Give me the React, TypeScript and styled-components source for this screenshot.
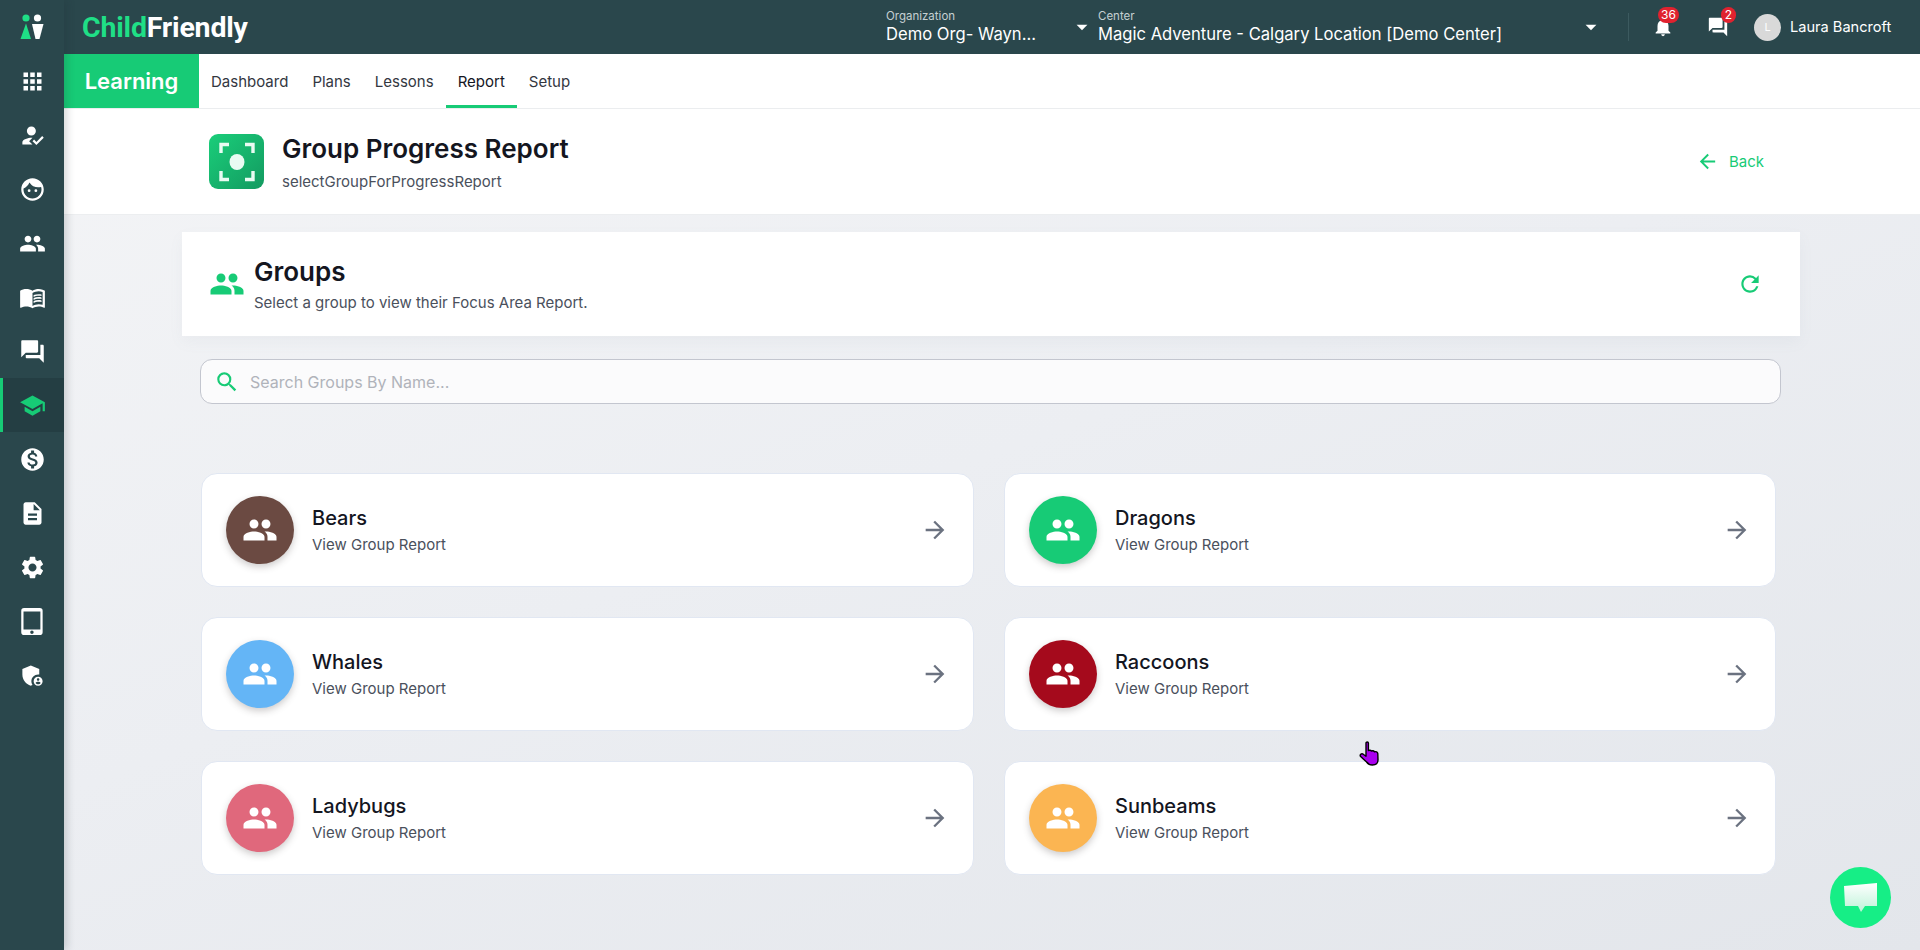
import styled, { createGlobalStyle } from 'styled-components';
import {
  MdAdminPanelSettings,
  MdApps,
  MdArrowBack,
  MdArrowDropDown,
  MdArrowForward,
  MdDescription,
  MdFace,
  MdForum,
  MdHowToReg,
  MdMenuBook,
  MdMonetizationOn,
  MdNotifications,
  MdOutlineSearch,
  MdPeople,
  MdRefresh,
  MdSchool,
  MdSettings,
  MdTabletMac,
} from 'react-icons/md';

const colors = {
  dark: '#2a474c',
  darkActive: '#243e43',
  green: '#17cb76',
  text: '#14161f',
  muted: '#4a505c',
};

const GlobalStyle = createGlobalStyle`
  html, body {
    margin: 0;
    height: 950px;
    overflow: hidden;
    font-family: Inter, "Liberation Sans", sans-serif;
    background: #eef0f3;
  }
  * { box-sizing: border-box; }
`;

const Shell = styled.div`
  display: flex;
  width: 1920px;
  height: 950px;
`;

const Sidebar = styled.aside`
  width: 64px;
  flex: none;
  background: ${colors.dark};
  display: flex;
  flex-direction: column;
  position: relative;
  z-index: 2;
  box-shadow: 3px 0 8px rgba(30, 40, 50, 0.18);
`;

const SideLogo = styled.div`
  height: 54px;
  display: flex;
  align-items: center;
  justify-content: center;
`;

const SideItem = styled.div<{ $active?: boolean }>`
  height: 54px;
  display: flex;
  align-items: center;
  justify-content: center;
  font-size: 27px;
  color: ${(p) => (p.$active ? colors.green : '#fff')};
  background: ${(p) => (p.$active ? colors.darkActive : 'transparent')};
  border-left: ${(p) => (p.$active ? `3px solid ${colors.green}` : '0')};
  padding-right: ${(p) => (p.$active ? '3px' : '0')};
`;

const Main = styled.div`
  flex: 1;
  min-width: 0;
  display: flex;
  flex-direction: column;
`;

const TopBar = styled.header`
  height: 54px;
  flex: none;
  background: ${colors.dark};
  display: flex;
  align-items: center;
  color: #fff;
`;

const Logo = styled.div`
  margin-left: 18px;
  font-family: Roboto, sans-serif;
  font-size: 28.5px;
  font-weight: 700;
  letter-spacing: -0.2px;
  color: #fff;
  width: 804px;
  flex: none;
  span { color: #1fdf86; }
`;

const Picker = styled.div<{ $width: number }>`
  width: ${(p) => p.$width}px;
  flex: none;
  display: flex;
  align-items: center;
  justify-content: space-between;
`;

const PickerText = styled.div`
  display: flex;
  flex-direction: column;
  line-height: 1;
`;

const PickerLabel = styled.span`
  font-size: 11.5px;
  color: #c5d0d2;
  margin-bottom: 3px;
`;

const PickerValue = styled.span`
  font-size: 16.6px;
  color: #fff;
  white-space: nowrap;
`;

const Caret = styled.div`
  font-size: 26px;
  display: flex;
  margin-right: 3px;
`;

const TopDivider = styled.div`
  width: 1px;
  height: 28px;
  background: #3c5a5f;
  margin-left: 21px;
`;

const IconButton = styled.div<{ $gap: number }>`
  position: relative;
  display: flex;
  font-size: 22px;
  margin-left: ${(p) => p.$gap}px;
`;

const Badge = styled.span<{ $left: number }>`
  position: absolute;
  left: ${(p) => p.$left}px;
  top: -9px;
  height: 16px;
  min-width: 15px;
  padding: 0 3px;
  border-radius: 8px;
  background: #e0222f;
  color: #fff;
  font-size: 12px;
  line-height: 16px;
  text-align: center;
`;

const Avatar = styled.div`
  width: 27px;
  height: 27px;
  border-radius: 50%;
  background: #d9d9d9;
  color: #fff;
  font-size: 11px;
  display: flex;
  align-items: center;
  justify-content: center;
  margin-left: 25px;
`;

const UserName = styled.span`
  font-size: 14.6px;
  margin-left: 9px;
  white-space: nowrap;
`;

const NavBar = styled.nav`
  height: 55px;
  flex: none;
  display: flex;
  background: #fff;
  border-bottom: 1px solid #ebedef;
`;

const ModuleTab = styled.div`
  width: 135px;
  background: ${colors.green};
  color: #fff;
  font-size: 22px;
  font-weight: 600;
  display: flex;
  align-items: center;
  justify-content: center;
`;

const NavList = styled.div`
  display: flex;
  margin-left: 0;
  padding-left: 0;
`;

const NavItem = styled.div<{ $active?: boolean }>`
  display: flex;
  align-items: center;
  padding: 0 12px;
  font-size: 15px;
  color: ${(p) => (p.$active ? '#14161f' : '#33373f')};
  border-bottom: 3px solid ${(p) => (p.$active ? colors.green : 'transparent')};
  padding-top: 3px;
`;

const Page = styled.main`
  flex: 1;
  display: flex;
  flex-direction: column;
  background: linear-gradient(160deg, #f3f4f6 0%, #eceef2 45%, #e3e6eb 100%);
`;

const PageHeader = styled.div`
  height: 106px;
  flex: none;
  background: #fff;
  display: flex;
  align-items: center;
  padding: 0 156px 0 145px;
  border-bottom: 1px solid #eceef0;
`;

const ReportIcon = styled.div`
  width: 55px;
  height: 55px;
  border-radius: 9px;
  background: linear-gradient(135deg, #1ace7a, #139a60);
  display: flex;
  align-items: center;
  justify-content: center;
`;

const HeaderText = styled.div`
  margin-left: 18px;
  flex: 1;
`;

const PageTitle = styled.h1`
  margin: 0;
  font-size: 26px;
  line-height: 32px;
  font-weight: 600;
  color: ${colors.text};
`;

const PageSubtitle = styled.p`
  margin: 8px 0 0;
  font-size: 15px;
  line-height: 18px;
  color: ${colors.muted};
`;

const BackLink = styled.div`
  display: flex;
  align-items: center;
  gap: 10px;
  color: ${colors.green};
  font-size: 15px;
  svg { font-size: 23px; }
`;

const Panel = styled.section`
  margin: 17px 120px 0 118px;
  display: flex;
  flex-direction: column;
`;

const GroupsHead = styled.div`
  height: 104px;
  background: #fff;
  display: flex;
  align-items: center;
  padding: 0 37px 0 27px;
  box-shadow: 0 6px 14px rgba(120, 130, 150, 0.06);
  svg.people { font-size: 36px; color: ${colors.green}; margin-top: 0; }
`;

const GroupsText = styled.div`
  margin-left: 9px;
  flex: 1;
`;

const GroupsTitle = styled.h2`
  margin: 0;
  font-size: 26px;
  line-height: 32px;
  font-weight: 600;
  color: ${colors.text};
`;

const GroupsSubtitle = styled.p`
  margin: 6px 0 0;
  font-size: 15px;
  line-height: 18px;
  color: ${colors.muted};
`;

const Refresh = styled.div`
  display: flex;
  font-size: 26px;
  color: ${colors.green};
`;

const Body = styled.div`
  padding: 23px 19px 0 18px;
`;

const SearchBox = styled.div`
  height: 45px;
  border: 1px solid #c3c6cf;
  border-radius: 12px;
  background: #fbfbfc;
  display: flex;
  align-items: center;
  padding-left: 13px;
  svg { font-size: 26px; color: ${colors.green}; }
`;

const SearchPlaceholder = styled.span`
  margin-left: 10px;
  font-size: 16px;
  color: #b0b3ba;
`;

const Grid = styled.div`
  margin-top: 69px;
  display: grid;
  grid-template-columns: 773px 772px;
  grid-auto-rows: 114px;
  gap: 30px 30px;
  padding-left: 1px;
`;

const Card = styled.div`
  background: #fff;
  border: 1px solid #e1e7f2;
  border-radius: 16px;
  display: flex;
  align-items: center;
  padding: 0 24px;
`;

const GroupAvatar = styled.div<{ $color: string }>`
  width: 68px;
  height: 68px;
  border-radius: 50%;
  background: ${(p) => p.$color};
  color: #fff;
  font-size: 36px;
  display: flex;
  align-items: center;
  justify-content: center;
  box-shadow: 0 3px 7px rgba(60, 50, 50, 0.25);
`;

const CardText = styled.div`
  flex: 1;
  margin-left: 18px;
`;

const CardName = styled.div`
  font-size: 20px;
  line-height: 24px;
  font-weight: 500;
  color: ${colors.text};
`;

const CardHint = styled.div`
  margin-top: 6px;
  font-size: 15px;
  line-height: 18px;
  color: ${colors.muted};
`;

const CardArrow = styled.div`
  display: flex;
  font-size: 28px;
  color: #6b7280;
`;

const ChatFab = styled.div`
  position: fixed;
  left: 1830px;
  top: 867px;
  width: 61px;
  height: 61px;
  border-radius: 50%;
  background: #16ee86;
  display: flex;
  align-items: center;
  justify-content: center;
`;

const Pointer = styled.svg`
  position: fixed;
  left: 1359px;
  top: 741px;
`;

const sideItems = [
  MdApps,
  MdHowToReg,
  MdFace,
  MdPeople,
  MdMenuBook,
  MdForum,
  MdSchool,
  MdMonetizationOn,
  MdDescription,
  MdSettings,
  MdTabletMac,
  MdAdminPanelSettings,
];

const navItems = ['Dashboard', 'Plans', 'Lessons', 'Report', 'Setup'];

const groups = [
  { name: 'Bears', color: '#6b4a42' },
  { name: 'Dragons', color: '#17cb76' },
  { name: 'Whales', color: '#64b5f6' },
  { name: 'Raccoons', color: '#a50a1c' },
  { name: 'Ladybugs', color: '#e0687c' },
  { name: 'Sunbeams', color: '#fbb552' },
];

const BrandMark = () => (
  <svg width="24" height="26" viewBox="0 0 24 26">
    <circle cx="6" cy="4" r="3.6" fill="#1fdf86" />
    <circle cx="17.5" cy="4" r="3.6" fill="#fff" />
    <path d="M6 9.5 L11 25 H0.5 Z" fill="#1fdf86" />
    <path d="M12 10 H23.5 L19.5 25 H15.5 Z" fill="#fff" />
  </svg>
);

const FocusIcon = () => (
  <svg width="36" height="40" viewBox="0 0 36 40" fill="none" stroke="#e9fbf2" strokeWidth="3.4">
    <path d="M2 11 V2.5 H10 M26 2.5 H34 V11 M2 29 V37.5 H10 M26 37.5 H34 V29" />
    <ellipse cx="18" cy="20" rx="7.5" ry="8" fill="#e9fbf2" stroke="none" />
  </svg>
);

const ChatBubble = () => (
  <svg width="34" height="30" viewBox="0 0 34 30">
    <defs>
      <linearGradient id="bubble" x1="0" y1="0" x2="0" y2="1">
        <stop offset="0" stopColor="#ffffff" />
        <stop offset="1" stopColor="#bdf3d8" />
      </linearGradient>
    </defs>
    <path d="M0 3 L33 0 V23 H21 L17 29 L14 23 H1 Z" fill="url(#bubble)" />
  </svg>
);

const HandPointer = () => (
  <Pointer width="20" height="25" viewBox="0 0 20 25">
    <path
      d="M7 2 C7 0.6 9.4 0.6 9.4 2 V9.5 C11 9 12 9.4 12.6 10 C14 9.6 15 10 15.5 10.8 C17 10.4 18.6 11 18.8 12.6 L19 19 C19 22.4 16.6 24 13.4 24 C10.6 24 9 23 7.6 21 L1.6 15.6 C0.4 14 2.4 12 4.2 13.2 L7 15.2 Z"
      fill="#a900ee"
      stroke="#000"
      strokeWidth="1.4"
      strokeLinejoin="round"
    />
  </Pointer>
);

export default function App() {
  return (
    <>
      <GlobalStyle />
      <Shell>
        <Sidebar>
          <SideLogo>
            <BrandMark />
          </SideLogo>
          {sideItems.map((Icon, i) => (
            <SideItem key={i} $active={Icon === MdSchool}>
              <Icon />
            </SideItem>
          ))}
        </Sidebar>
        <Main>
          <TopBar>
            <Logo>
              <span>Child</span>Friendly
            </Logo>
            <Picker $width={212}>
              <PickerText>
                <PickerLabel>Organization</PickerLabel>
                <PickerValue>Demo Org- Wayn...</PickerValue>
              </PickerText>
              <Caret>
                <MdArrowDropDown />
              </Caret>
            </Picker>
            <Picker $width={509}>
              <PickerText>
                <PickerLabel>Center</PickerLabel>
                <PickerValue>Magic Adventure - Calgary Location [Demo Center]</PickerValue>
              </PickerText>
              <Caret>
                <MdArrowDropDown />
              </Caret>
            </Picker>
            <TopDivider />
            <IconButton $gap={23}>
              <MdNotifications />
              <Badge $left={6}>36</Badge>
            </IconButton>
            <IconButton $gap={33}>
              <MdForum />
              <Badge $left={14}>2</Badge>
            </IconButton>
            <Avatar>L</Avatar>
            <UserName>Laura Bancroft</UserName>
          </TopBar>
          <NavBar>
            <ModuleTab>Learning</ModuleTab>
            <NavList>
              {navItems.map((item) => (
                <NavItem key={item} $active={item === 'Report'}>
                  {item}
                </NavItem>
              ))}
            </NavList>
          </NavBar>
          <Page>
            <PageHeader>
              <ReportIcon>
                <FocusIcon />
              </ReportIcon>
              <HeaderText>
                <PageTitle>Group Progress Report</PageTitle>
                <PageSubtitle>selectGroupForProgressReport</PageSubtitle>
              </HeaderText>
              <BackLink>
                <MdArrowBack />
                Back
              </BackLink>
            </PageHeader>
            <Panel>
              <GroupsHead>
                <MdPeople className="people" />
                <GroupsText>
                  <GroupsTitle>Groups</GroupsTitle>
                  <GroupsSubtitle>Select a group to view their Focus Area Report.</GroupsSubtitle>
                </GroupsText>
                <Refresh>
                  <MdRefresh />
                </Refresh>
              </GroupsHead>
              <Body>
                <SearchBox>
                  <MdOutlineSearch />
                  <SearchPlaceholder>Search Groups By Name...</SearchPlaceholder>
                </SearchBox>
                <Grid>
                  {groups.map((group) => (
                    <Card key={group.name}>
                      <GroupAvatar $color={group.color}>
                        <MdPeople />
                      </GroupAvatar>
                      <CardText>
                        <CardName>{group.name}</CardName>
                        <CardHint>View Group Report</CardHint>
                      </CardText>
                      <CardArrow>
                        <MdArrowForward />
                      </CardArrow>
                    </Card>
                  ))}
                </Grid>
              </Body>
            </Panel>
          </Page>
        </Main>
      </Shell>
      <ChatFab>
        <ChatBubble />
      </ChatFab>
      <HandPointer />
    </>
  );
}
